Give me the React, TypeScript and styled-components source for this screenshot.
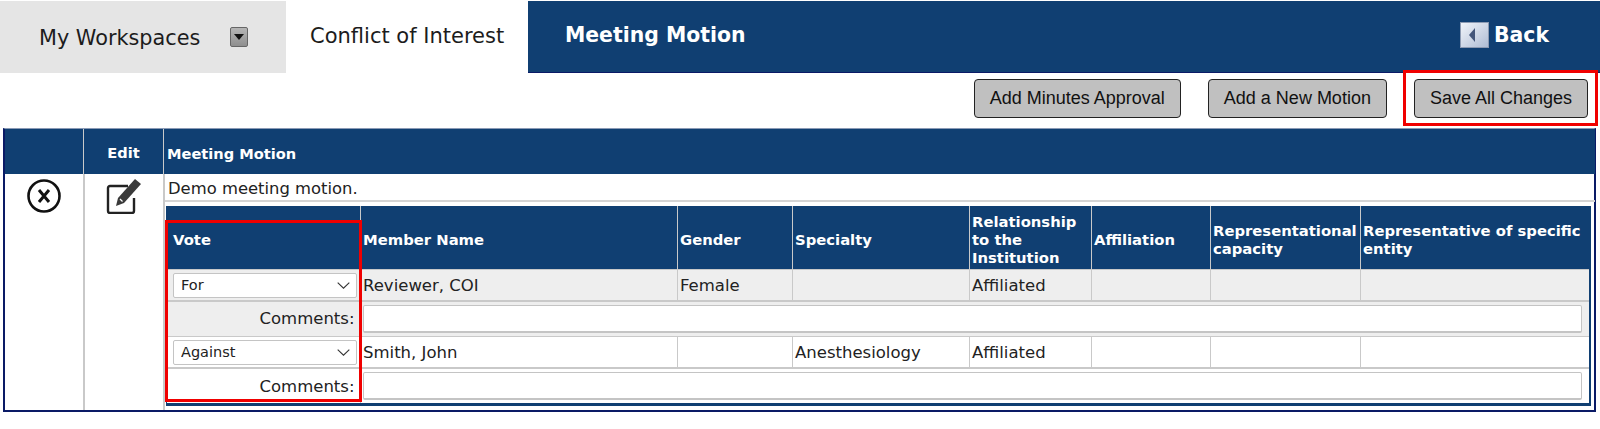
import React, {FC} from 'react';
import styled, {createGlobalStyle} from 'styled-components';

const NAVY = '#103f72';
const LINE = '#c9c9c9';

const GlobalStyle = createGlobalStyle`
  html, body {
    margin: 0;
    padding: 0;
    background: #fff;
  }
  body {
    font-family: "DejaVu Sans", Tahoma, sans-serif;
    color: #222;
  }
`;

const Page = styled.div`
  width: 1600px;
  height: 429px;
  overflow: hidden;
  padding-top: 1px;
  box-sizing: border-box;
`;

const TopBar = styled.div`
  display: flex;
  height: 72px;
`;

const WorkspaceTab = styled.div`
  width: 286px;
  background: #e5e5e5;
  display: flex;
  align-items: center;
  padding: 2px 0 0 39px;
  box-sizing: border-box;
  font-size: 20.8px;
  color: #1c1c1c;
`;

const DropButton = styled.span`
  width: 18px;
  height: 20px;
  margin: -2px 0 0 30px;
  box-sizing: border-box;
  background: linear-gradient(#b5b5b5, #8f8f8f);
  border: 1px solid #666;
  border-radius: 2px;
  display: flex;
  align-items: center;
  justify-content: center;
  &::before {
    content: '';
    border-left: 5px solid transparent;
    border-right: 5px solid transparent;
    border-top: 6px solid #111;
  }
`;

const ActiveTab = styled.div`
  width: 242px;
  display: flex;
  align-items: center;
  padding: 0 0 3px 24px;
  box-sizing: border-box;
  font-size: 21px;
  color: #1c1c1c;
`;

const NavBar = styled.div`
  flex: 1;
  background: ${NAVY};
  border-bottom: 1px solid #0a1a66;
  display: flex;
  align-items: center;
  justify-content: space-between;
  padding: 0 51px 3px 37px;
  color: #fff;
  font-weight: bold;
  font-size: 20.4px;
`;

const BackLink = styled.div`
  display: flex;
  align-items: center;
  gap: 5px;
`;

const Toolbar = styled.div`
  height: 55px;
  box-sizing: border-box;
  display: flex;
  justify-content: flex-end;
  align-items: flex-start;
  gap: 27px;
  padding: 6px 12px 0 0;
`;

const ActionButton = styled.button`
  height: 39px;
  padding: 0 15px;
  background: #c0c0c0;
  border: 1px solid #222;
  border-radius: 4px;
  font-family: "Liberation Sans", Arial, sans-serif;
  font-size: 18px;
  color: #111;
`;

const Highlighted = styled.div`
  position: relative;
`;

const RedBox = styled.div<{$inset: string}>`
  position: absolute;
  inset: ${p => p.$inset};
  border: 3px solid #f00000;
  pointer-events: none;
`;

const Grid = styled.div`
  margin: 0 4px 0 3px;
  border: 2px solid #0a1a66;
  border-top: 1px solid #8a9ab5;
  height: 284px;
  box-sizing: border-box;
  display: grid;
  grid-template-columns: 78px 80px 1fr;
  grid-template-rows: 45px 1fr;
`;

const GridHead = styled.div<{$center?: boolean}>`
  background: ${NAVY};
  color: #fff;
  font-weight: bold;
  font-size: 14.6px;
  display: flex;
  align-items: center;
  justify-content: ${p => (p.$center ? 'center' : 'flex-start')};
  padding: ${p => (p.$center ? 2 : 3)}px 0 0 ${p => (p.$center ? 0 : 3)}px;
  border-left: 1px solid ${LINE};
  &:first-child {
    border-left: none;
  }
`;

const IconCell = styled.div<{$first?: boolean}>`
  display: flex;
  justify-content: center;
  align-items: flex-start;
  padding-top: 4px;
  border-left: ${p => (p.$first ? 'none' : `2px solid ${LINE}`)};
`;

const MotionCell = styled.div`
  border-left: 2px solid ${LINE};
`;

const MotionText = styled.div`
  height: 28px;
  box-sizing: border-box;
  padding: 4px 0 0 3px;
  font-size: 16.4px;
  line-height: 22px;
  border-bottom: 2px solid #d4d4d4;
`;

const VoteWrap = styled.div`
  position: relative;
  margin: 4px 4px 0 1px;
  border-left: 1px solid ${NAVY};
  border-right: 2px solid ${NAVY};
  border-bottom: 3px solid ${NAVY};
`;

const VoteTable = styled.table`
  width: 100%;
  table-layout: fixed;
  border-collapse: collapse;
  font-size: 16.5px;
`;

const HeadCell = styled.th`
  height: 63px;
  padding: 5px 1px 0 2.5px;
  box-sizing: border-box;
  background: ${NAVY};
  color: #fff;
  font-size: 14.8px;
  line-height: 18px;
  font-weight: bold;
  text-align: left;
  border-left: 1px solid ${LINE};
  &:first-child {
    border-left: none;
    padding-left: 6px;
  }
`;

const MemberRow = styled.tr<{$shade?: boolean}>`
  background: ${p => (p.$shade ? '#eeeeee' : '#fff')};
`;

const Cell = styled.td`
  height: 32px;
  padding: 1px 0 0 2.5px;
  box-sizing: border-box;
  border: 1px solid ${LINE};
  border-bottom-width: 2px;
  white-space: nowrap;
  &:last-child {
    border-right: none;
  }
`;

const VoteCell = styled(Cell)`
  padding: 1px 3px 0 6px;
  border-left: none;
`;

const CommentLabel = styled.td`
  height: 35px;
  padding: 0 5px 0 0;
  box-sizing: border-box;
  text-align: right;
  border-bottom: 1px solid ${LINE};
  tr:last-child & {
    border-bottom: none;
  }
`;

const CommentCell = styled.td`
  padding: 0 7px 0 2px;
  border-left: 1px solid ${LINE};
  border-bottom: 1px solid ${LINE};
  tr:last-child & {
    border-bottom: none;
  }
`;

const SelectBox = styled.div`
  position: relative;
`;

const VoteSelect = styled.select`
  width: 100%;
  height: 25px;
  display: block;
  padding-left: 7px;
  background: #fff;
  border: 1px solid #c4c4c4;
  border-radius: 2px;
  appearance: none;
  font-family: "DejaVu Sans", Tahoma, sans-serif;
  font-size: 14.5px;
  color: #222;
`;

const Chevron = styled.svg`
  position: absolute;
  right: 7px;
  top: 9px;
  pointer-events: none;
`;

const CommentInput = styled.input`
  width: 100%;
  height: 28px;
  display: block;
  box-sizing: border-box;
  border: 1px solid #c4c4c4;
  border-bottom-width: 2px;
  border-radius: 2px;
  background: #fff;
`;

const COLUMN_WIDTHS = [193, 317, 115, 177, 122, 119, 150, 229];

const COLUMNS = [
    'Vote',
    'Member Name',
    'Gender',
    'Specialty',
    'Relationship to the Institution',
    'Affiliation',
    'Representational capacity',
    'Representative of specific entity',
];

const MEMBERS = [
    {name: 'Reviewer, COI', vote: 'For', gender: 'Female', specialty: '', relationship: 'Affiliated'},
    {name: 'Smith, John', vote: 'Against', gender: '', specialty: 'Anesthesiology', relationship: 'Affiliated'},
];

const BackIcon: FC = () => (
    <svg width="29" height="26" viewBox="0 0 29 26">
        <defs>
            <linearGradient id="backFill" x1="0" y1="0" x2="1" y2="1">
                <stop offset="0" stopColor="#f2f5fa"/>
                <stop offset="1" stopColor="#aebcd4"/>
            </linearGradient>
        </defs>
        <rect x="0.5" y="0.5" width="28" height="25" fill="url(#backFill)" stroke="#8d9bb3"/>
        <path d="M15 6 L9 13 L15 20 Z" fill="#44567a"/>
    </svg>
);

const DeleteIcon: FC = () => (
    <svg width="36" height="36" viewBox="0 0 36 36" fill="none" stroke="#111">
        <circle cx="18" cy="18" r="15.5" strokeWidth="2.6"/>
        <path d="M13 12 L23 24 M23 12 L13 24" strokeWidth="3"/>
    </svg>
);

const EditIcon: FC = () => (
    <svg width="36" height="36" viewBox="0 0 36 36" fill="none">
        <path d="M22 8 H4 a2 2 0 0 0 -2 2 V33 a2 2 0 0 0 2 2 H26 a2 2 0 0 0 2 -2 V20" stroke="#222" strokeWidth="2.4"/>
        <path d="M29 1 L35 6 L18 25 L10 28 L12 20 Z" fill="#3a3a3a"/>
        <path d="M14 21 L16.5 23.5" stroke="#fff" strokeWidth="1.2"/>
    </svg>
);

const MemberRows: FC<{member: typeof MEMBERS[number]; shade: boolean}> = ({member, shade}) => (
    <>
        <MemberRow $shade={shade}>
            <VoteCell>
                <SelectBox>
                    <VoteSelect defaultValue={member.vote}>
                        <option>For</option>
                        <option>Against</option>
                        <option>Abstain</option>
                    </VoteSelect>
                    <Chevron width="13" height="7" viewBox="0 0 13 7" fill="none" stroke="#333">
                        <path d="M0.7 0.7 L6.5 6.2 L12.3 0.7" strokeWidth="1.1"/>
                    </Chevron>
                </SelectBox>
            </VoteCell>
            <Cell>{member.name}</Cell>
            <Cell>{member.gender}</Cell>
            <Cell>{member.specialty}</Cell>
            <Cell>{member.relationship}</Cell>
            <Cell/>
            <Cell/>
            <Cell/>
        </MemberRow>
        <MemberRow $shade={shade}>
            <CommentLabel>Comments:</CommentLabel>
            <CommentCell colSpan={7}><CommentInput/></CommentCell>
        </MemberRow>
    </>
);

export default function App() {
    return (
        <Page>
            <GlobalStyle/>
            <TopBar>
                <WorkspaceTab>My Workspaces<DropButton/></WorkspaceTab>
                <ActiveTab>Conflict of Interest</ActiveTab>
                <NavBar>
                    <span>Meeting Motion</span>
                    <BackLink><BackIcon/>Back</BackLink>
                </NavBar>
            </TopBar>
            <Toolbar>
                <ActionButton>Add Minutes Approval</ActionButton>
                <ActionButton>Add a New Motion</ActionButton>
                <Highlighted>
                    <ActionButton>Save All Changes</ActionButton>
                    <RedBox $inset="-9px -10px -8px -11px"/>
                </Highlighted>
            </Toolbar>
            <Grid>
                <GridHead/>
                <GridHead $center>Edit</GridHead>
                <GridHead>Meeting Motion</GridHead>
                <IconCell $first><DeleteIcon/></IconCell>
                <IconCell><EditIcon/></IconCell>
                <MotionCell>
                    <MotionText>Demo meeting motion.</MotionText>
                    <VoteWrap>
                        <VoteTable>
                            <colgroup>
                                {COLUMN_WIDTHS.map((w, i) => <col key={i} width={w}/>)}
                            </colgroup>
                            <thead>
                                <tr>
                                    {COLUMNS.map(c => <HeadCell key={c}>{c}</HeadCell>)}
                                </tr>
                            </thead>
                            <tbody>
                                {MEMBERS.map((m, i) => <MemberRows key={m.name} member={m} shade={i === 0}/>)}
                            </tbody>
                        </VoteTable>
                        <RedBox $inset="14px auto 1px -2px" style={{width: 191}}/>
                    </VoteWrap>
                </MotionCell>
            </Grid>
        </Page>
    );
}
